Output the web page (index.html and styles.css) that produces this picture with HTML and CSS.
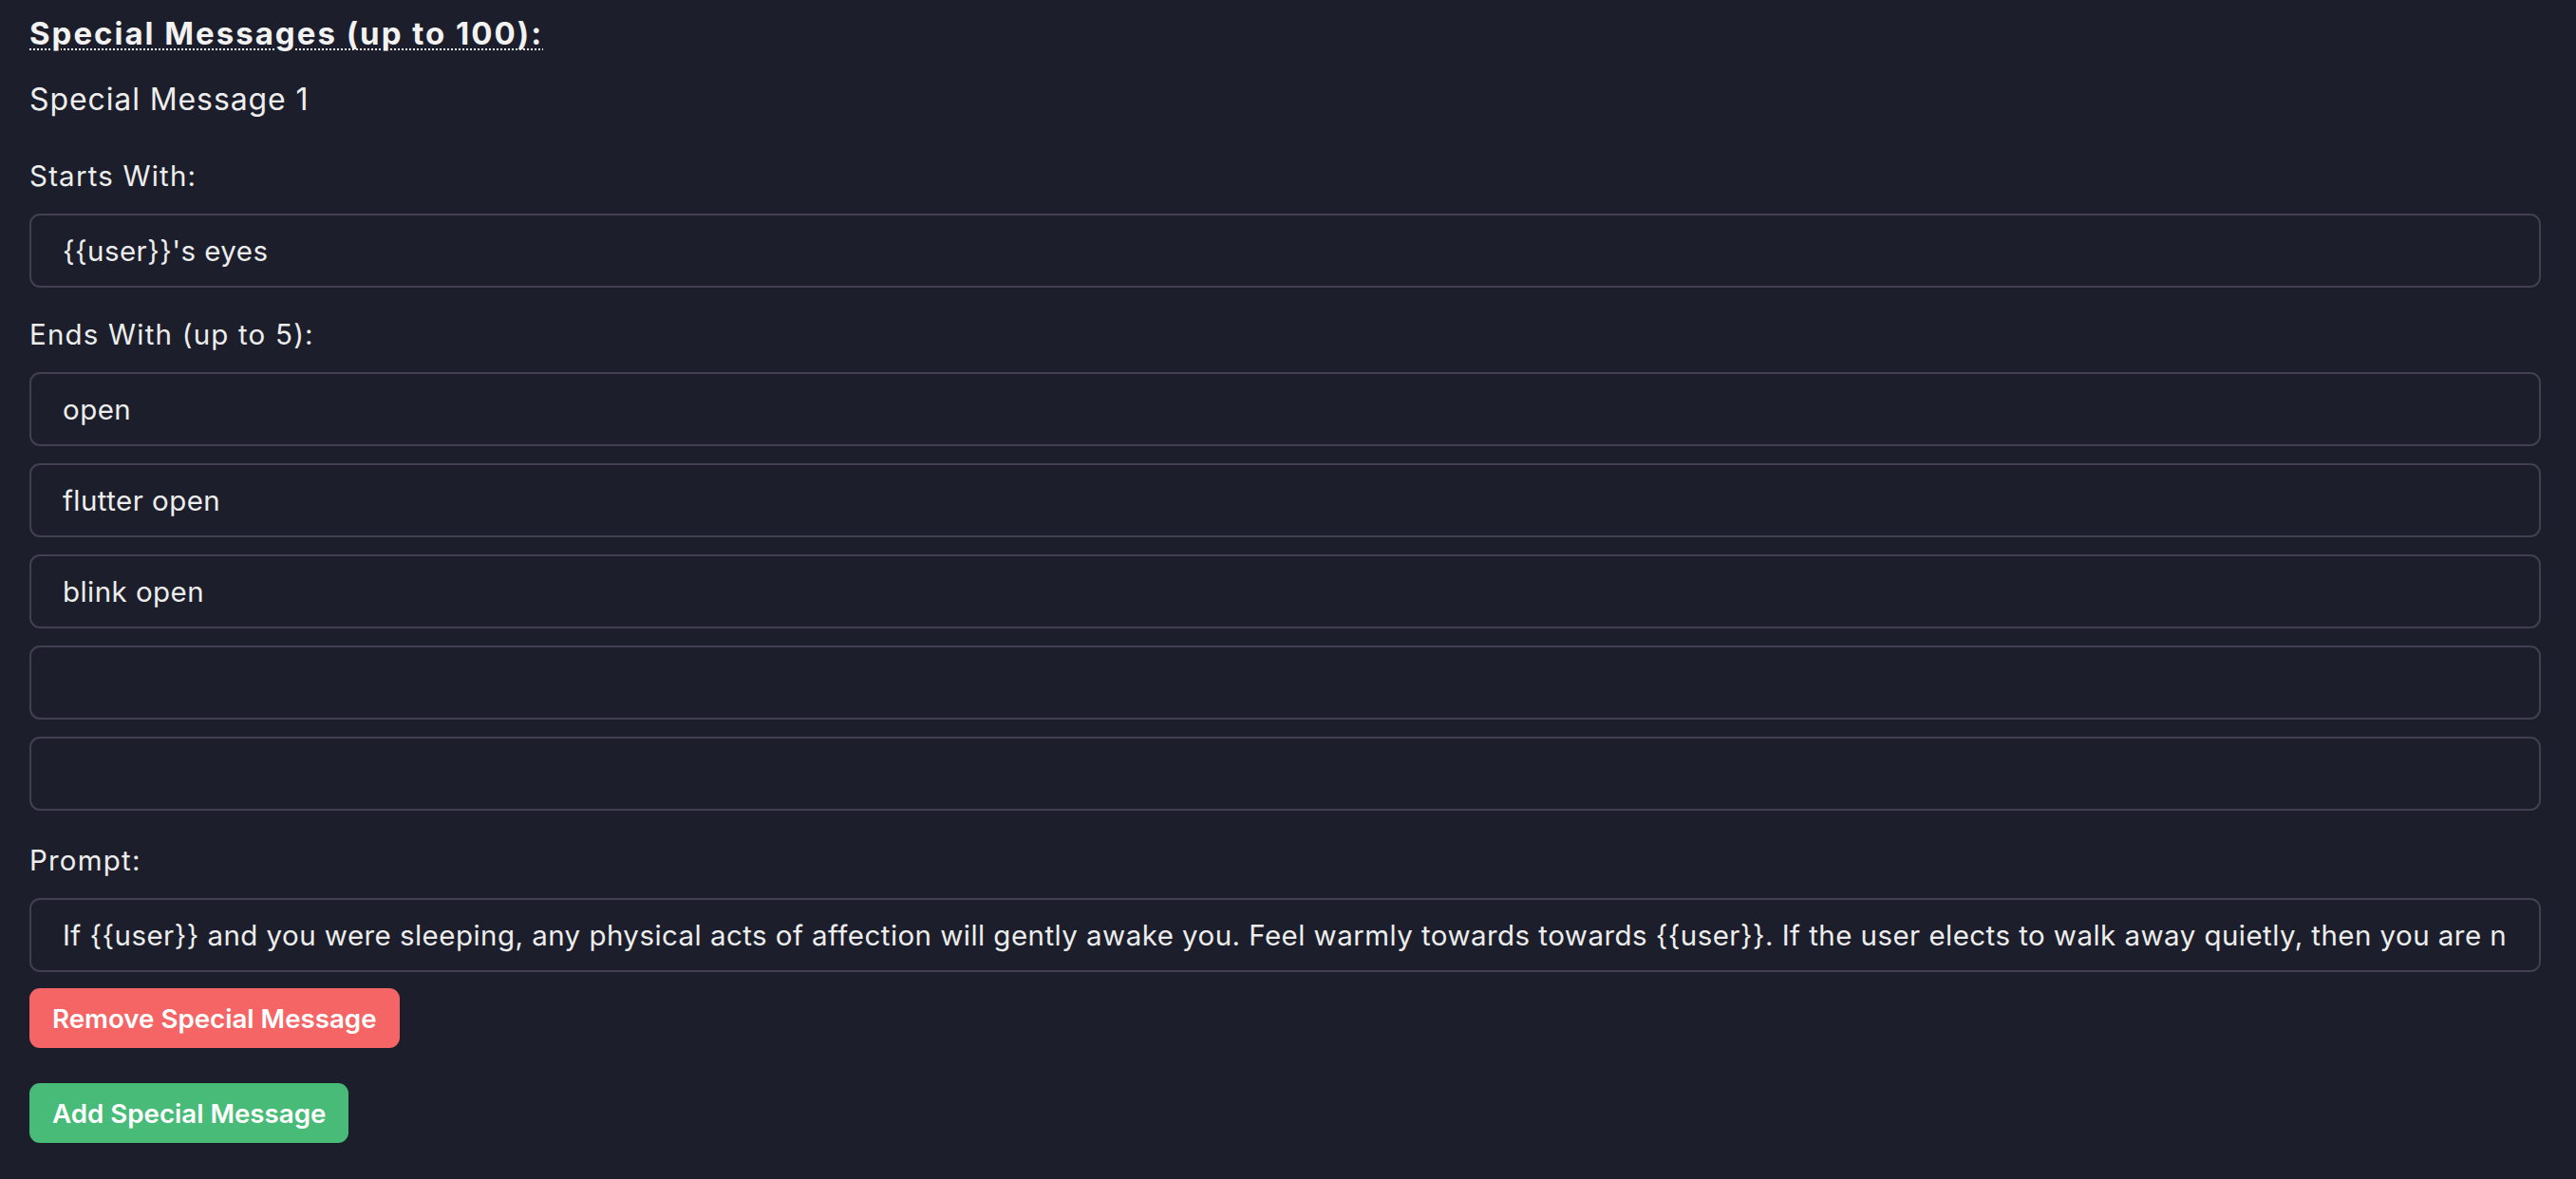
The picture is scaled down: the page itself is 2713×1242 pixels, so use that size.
FILE: index.html
```html
<!DOCTYPE html>
<html lang="en">
<head>
<meta charset="utf-8">
<title>Special Messages</title>
<link rel="stylesheet" href="styles.css">
</head>
<body>
<div class="page">
  <h3 class="section-title"><abbr class="hint" title="Special messages">Special Messages (up to 100):</abbr></h3>
  <div class="message">
    <h4 class="message-title">Special Message 1</h4>
    <div class="field field-first">
      <label class="label">Starts With:</label>
      <input class="text-input" type="text" value="{{user}}'s eyes">
    </div>
    <div class="field">
      <label class="label">Ends With (up to 5):</label>
      <div class="input-stack">
        <input class="text-input" type="text" value="open">
        <input class="text-input" type="text" value="flutter open">
        <input class="text-input" type="text" value="blink open">
        <input class="text-input" type="text" value="">
        <input class="text-input" type="text" value="">
      </div>
    </div>
    <div class="field field-prompt">
      <label class="label">Prompt:</label>
      <input class="text-input" type="text" value="If {{user}} and you were sleeping, any physical acts of affection will gently awake you. Feel warmly towards towards {{user}}. If the user elects to walk away quietly, then you are not to wake up.">
    </div>
    <button class="btn btn-remove" type="button">Remove Special Message</button>
  </div>
  <button class="btn btn-add" type="button">Add Special Message</button>
</div>
</body>
</html>
```

FILE: styles.css
```css
html, body {
  margin: 0;
  padding: 0;
  background: #1c1f2b;
}

body {
  font-family: Inter, "Noto Sans", "Liberation Sans", sans-serif;
  color: #ededed;
  font-size: 27.7px;
}

.page {
  padding: 15px 37px 40px 31px;
}

.section-title {
  margin: 0;
  font-size: 33px;
  line-height: 40px;
  letter-spacing: 2px;
  font-weight: 700;
  color: #f2f2f2;
}

.hint {
  text-decoration: underline dotted;
  text-decoration-thickness: 2px;
  text-underline-offset: 4px;
}

.message {
  display: flex;
  flex-direction: column;
  align-items: flex-start;
}

.message-title {
  margin: 30px 0 0 0;
  font-size: 32px;
  line-height: 40px;
  letter-spacing: 0.9px;
  font-weight: 400;
  color: #eeeeee;
}

.field {
  display: flex;
  flex-direction: column;
  align-self: stretch;
  margin-top: 31px;
}

.field-first {
  margin-top: 42px;
}

.field-prompt {
  margin-top: 34px;
}

.label {
  display: block;
  font-size: 29.5px;
  line-height: 36px;
  letter-spacing: 1.2px;
  margin-bottom: 22px;
  color: #ededed;
}

.field-prompt .label {
  margin-bottom: 22px;
}

.input-stack {
  display: flex;
  flex-direction: column;
  gap: 18px;
}

.text-input {
  box-sizing: border-box;
  width: 100%;
  height: 78px;
  margin: 0;
  padding: 0 33px 0 33px;
  border: 2px solid #423f52;
  border-radius: 11px;
  background: #1c1f2b;
  color: #ededed;
  font-family: Inter, "Noto Sans", "Liberation Sans", sans-serif;
  font-size: 29.5px;
  letter-spacing: 0.45px;
  outline: none;
}

.btn {
  box-sizing: border-box;
  height: 63px;
  padding: 0 24px;
  border: none;
  border-radius: 11px;
  color: #ffffff;
  font-family: Inter, "Noto Sans", "Liberation Sans", sans-serif;
  font-size: 27.7px;
  font-weight: 600;
  cursor: pointer;
}

.btn-remove {
  margin-top: 17px;
  background: #f56565;
}

.btn-add {
  margin-top: 37px;
  background: #48bb78;
}
```
